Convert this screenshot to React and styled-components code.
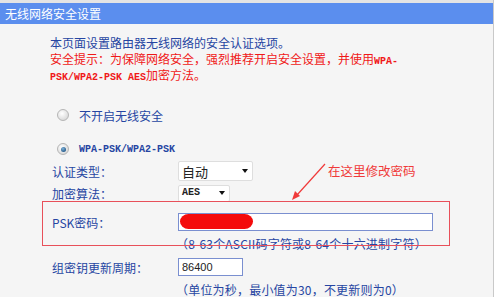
import React from 'react';
import styled, { createGlobalStyle } from 'styled-components';

const GlobalStyle = createGlobalStyle`
  html, body {
    margin: 0;
    padding: 0;
    background: #ffffff;
  }
  body {
    font-family: 'Noto Sans CJK SC', 'Noto Sans', sans-serif;
  }
`;

const Page = styled.div`
  position: relative;
  width: 493px;
  height: 297px;
  background: #f5f5f5;
  border-right: 1px solid #c9c9c9;
  overflow: hidden;
`;

const Header = styled.div`
  height: 21px;
  border-top: 3px solid #e4e4e4;
  background: #5b8eee;
  display: flex;
  align-items: center;
  padding-left: 5px;
`;

const Title = styled.span`
  color: #ffffff;
  font-size: 12px;
  line-height: 1;
`;

const Content = styled.div`
  padding: 11px 0 0 50px;
`;

const Intro = styled.div`
  display: flex;
  flex-direction: column;
`;

const IntroLine = styled.div`
  height: 16px;
  line-height: 16px;
  font-size: 12px;
  white-space: nowrap;
  color: ${(p) => (p.$warn ? '#f01818' : '#2645a2')};
`;

const Mono = styled.span`
  font-family: 'Liberation Mono', 'DejaVu Sans Mono', monospace;
  font-size: 10px;
  font-weight: bold;
`;

const RadioRow = styled.div`
  display: flex;
  align-items: center;
  gap: 10px;
  height: 22px;
  margin-top: ${(p) => p.$mt || 0}px;
  padding-left: 7px;
`;

const Radio = styled.span`
  width: 10px;
  height: 10px;
  border-radius: 50%;
  border: 1px solid #b5b5b5;
  background: radial-gradient(circle at 40% 35%, #ffffff 0%, #e2e2e2 60%, #cfcfcf 100%);
  display: flex;
  align-items: center;
  justify-content: center;

  &::after {
    content: '';
    display: ${(p) => (p.$checked ? 'block' : 'none')};
    width: 5px;
    height: 5px;
    border-radius: 50%;
    background: radial-gradient(circle at 40% 35%, #7fb2d8 0%, #2a5f8f 70%);
  }
`;

const RadioLabel = styled.span`
  color: #2645a2;
  font-size: 12px;
  white-space: nowrap;
`;

const MonoLabel = styled.span`
  color: #2645a2;
  font-family: 'Liberation Mono', 'DejaVu Sans Mono', monospace;
  font-size: 10px;
  font-weight: bold;
`;

const FieldRow = styled.div`
  display: grid;
  grid-template-columns: 126px auto;
  align-items: center;
  height: ${(p) => p.$h || 22}px;
  margin-top: ${(p) => p.$mt || 0}px;
  padding-left: 2px;
`;

const Label = styled.span`
  color: #2645a2;
  font-size: 12px;
  white-space: nowrap;
`;

const Hint = styled.span`
  grid-column: 2;
  color: #2645a2;
  font-size: 12px;
  white-space: nowrap;
  margin-left: -2px;
  letter-spacing: 0.2px;
`;

const Select = styled.div`
  width: ${(p) => p.$w}px;
  height: ${(p) => p.$h}px;
  box-sizing: border-box;
  background: #ffffff;
  border: 1px solid #dedede;
  border-radius: 2px;
  display: flex;
  align-items: center;
  justify-content: space-between;
  padding: 0 4px 0 3px;
  color: #222;
  font-size: ${(p) => p.$fs}px;
`;

const SelectText = styled.span`
  font-family: ${(p) => (p.$mono ? "'Liberation Mono', monospace" : "inherit")};
  font-weight: ${(p) => (p.$mono ? 'bold' : 'normal')};
  line-height: 1;
`;

const Arrow = styled.span`
  width: 0;
  height: 0;
  border-left: 3.5px solid transparent;
  border-right: 3.5px solid transparent;
  border-top: 4px solid #111;
`;

const TextBox = styled.div`
  position: relative;
  width: ${(p) => p.$w}px;
  height: 18px;
  box-sizing: border-box;
  background: #ffffff;
  border: 1.5px solid #7a8fd0;
  display: flex;
  align-items: center;
  padding-left: 3px;
  font-family: 'Liberation Sans', Arial, sans-serif;
  font-size: 11px;
  color: #222;
`;

const Redaction = styled.span`
  position: absolute;
  left: 1px;
  top: 0px;
  width: 73px;
  height: 15px;
  border-radius: 9px / 8px;
  background: #f40b0b;
`;

const Highlight = styled.div`
  position: absolute;
  left: 42px;
  top: 201px;
  width: 406px;
  height: 43px;
  border: 1.5px solid #e8505a;
  pointer-events: none;
`;

const Callout = styled.span`
  position: absolute;
  left: 328px;
  top: 161px;
  color: #f03a3a;
  font-size: 12.5px;
  white-space: nowrap;
`;

const CalloutArrow = styled.svg`
  position: absolute;
  left: 288px;
  top: 160px;
`;

export default function App() {
  return (
    <>
      <GlobalStyle />
      <Page>
        <Header>
          <Title>无线网络安全设置</Title>
        </Header>
        <Content>
          <Intro>
            <IntroLine>本页面设置路由器无线网络的安全认证选项。</IntroLine>
            <IntroLine $warn>
              安全提示：为保障网络安全，强烈推荐开启安全设置，并使用<Mono>WPA-</Mono>
            </IntroLine>
            <IntroLine $warn>
              <Mono>PSK/WPA2-PSK AES</Mono>加密方法。
            </IntroLine>
          </Intro>

          <RadioRow $mt={21}>
            <Radio />
            <RadioLabel>不开启无线安全</RadioLabel>
          </RadioRow>
          <RadioRow $mt={12}>
            <Radio $checked />
            <MonoLabel>WPA-PSK/WPA2-PSK</MonoLabel>
          </RadioRow>

          <FieldRow>
            <Label>认证类型：</Label>
            <Select $w={75} $h={20} $fs={13}>
              <SelectText>自动</SelectText>
              <Arrow />
            </Select>
          </FieldRow>
          <FieldRow>
            <Label>加密算法：</Label>
            <Select $w={52} $h={17} $fs={10}>
              <SelectText $mono>AES</SelectText>
              <Arrow />
            </Select>
          </FieldRow>

          <FieldRow $mt={7}>
            <Label>PSK密码：</Label>
            <TextBox $w={255}>
              <Redaction />
            </TextBox>
          </FieldRow>
          <FieldRow $h={20}>
            <Hint>（8-63个ASCII码字符或8-64个十六进制字符）</Hint>
          </FieldRow>

          <FieldRow $mt={3}>
            <Label>组密钥更新周期：</Label>
            <TextBox $w={65}>86400</TextBox>
          </FieldRow>
          <FieldRow $h={20} $mt={1}>
            <Hint>（单位为秒，最小值为30，不更新则为0）</Hint>
          </FieldRow>
        </Content>

        <Highlight />
        <CalloutArrow width="45" height="45" viewBox="0 0 45 45">
          <line x1="37" y1="4" x2="9" y2="35" stroke="#f03a3a" strokeWidth="1.2" />
          <polygon points="4,40 7,31 12,36" fill="#f03a3a" />
        </CalloutArrow>
        <Callout>在这里修改密码</Callout>
      </Page>
    </>
  );
}
